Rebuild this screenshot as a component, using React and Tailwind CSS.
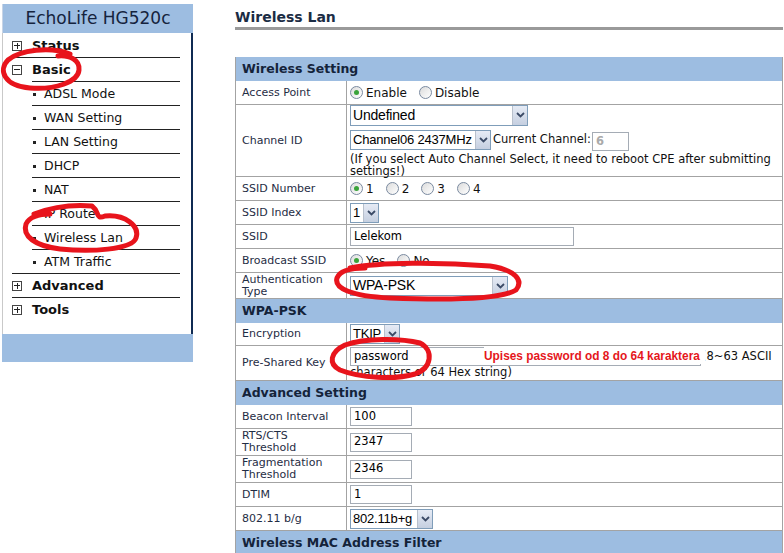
import React from "react";

const FONT = { fontFamily: '"DejaVu Sans", Verdana, sans-serif' };
const ARIAL = { fontFamily: '"Liberation Sans", Arial, sans-serif' };

function PlusBox({ minus }) {
  return (
    <span className="relative inline-block h-[10px] w-[10px] shrink-0 border border-[#444] bg-white">
      <span className="absolute left-[1px] top-[3px] h-[1px] w-[6px] bg-[#222]" />
      {!minus && <span className="absolute left-[3.5px] top-[1px] h-[6px] w-[1px] bg-[#222]" />}
    </span>
  );
}

function NavTop({ label, minus, noLine, subLine }) {
  return (
    <div className="relative ml-[9px] mr-[11px] flex h-[24px] items-center">
      <PlusBox minus={minus} />
      <span className="ml-[10px] text-[13px] font-bold text-[#111]">{label}</span>
      {!noLine && (
        <span className={`absolute bottom-0 right-0 h-[1px] bg-[#222] ${subLine ? "left-[20px]" : "left-0"}`} />
      )}
    </div>
  );
}

function NavSub({ label, last }) {
  return (
    <div className="relative ml-[9px] mr-[11px] flex h-[24px] items-center pl-[21px]">
      <span className="inline-block h-[3px] w-[3px] bg-[#222]" />
      <span className="ml-[8px] text-[12.5px] text-[#111]">{label}</span>
      <span className={`absolute bottom-0 right-0 h-[1px] bg-[#222] ${last ? "left-0" : "left-[20px]"}`} />
    </div>
  );
}

function Radio({ checked, label }) {
  return (
    <span className="mr-[12px] inline-flex items-center gap-[3px]">
      <span className="flex h-[13px] w-[13px] items-center justify-center rounded-full border border-[#7a8aa0] bg-gradient-to-br from-[#dcdcdc] to-white">
        {checked && <span className="h-[5px] w-[5px] rounded-full bg-[#3aa33a]" />}
      </span>
      <span className="text-[12px] text-[#111]">{label}</span>
    </span>
  );
}

function Arrow() {
  return (
    <span className="flex h-full w-[15px] shrink-0 items-center justify-center border-l border-[#b8c0cc] bg-gradient-to-b from-[#e6ebf5] to-[#c5cfe0]">
      <svg width="9" height="6" viewBox="0 0 9 6">
        <path d="M1 1 L4.5 4.5 L8 1" fill="none" stroke="#3b4a66" strokeWidth="1.8" />
      </svg>
    </span>
  );
}

function Select({ w, h = "h-[20px]", text, size = "text-[13px]" }) {
  return (
    <span className={`inline-flex ${w} ${h} shrink-0 items-stretch border border-[#7f9db9] bg-white`} style={ARIAL}>
      <span className={`flex flex-1 items-center overflow-hidden whitespace-nowrap pl-[2px] ${size} tracking-[-0.2px] text-black`}>
        {text}
      </span>
      <Arrow />
    </span>
  );
}

function Input({ w, value, muted }) {
  return (
    <span className={`inline-flex ${w} h-[19px] shrink-0 items-center border border-[#a5acb5] bg-white pl-[3px] text-[11.5px] ${muted ? "font-bold text-[#aaa]" : "text-black"}`}>
      {value}
    </span>
  );
}

function Section({ title }) {
  return (
    <div className="flex h-[24px] items-center bg-[#9dbde1] pl-[6px] text-[12.5px] font-bold text-[#14233a]">
      {title}
    </div>
  );
}

function Row({ label, h, children }) {
  return (
    <div className={`flex ${h} border-b border-[#a3a3a3]`}>
      <div className="flex w-[111px] shrink-0 items-center border-r border-[#a3a3a3] pl-[6px] pr-[8px] text-[11px] leading-[12px] text-[#1f2d44]">
        {label}
      </div>
      <div className="flex flex-1 items-center pl-[3px]">{children}</div>
    </div>
  );
}

export default function App() {
  return (
    <div className="relative h-[553px] w-[784px] overflow-hidden bg-white" style={FONT}>
      <div className="flex">
        {/* sidebar */}
        <div className="ml-[2px] mt-[4px] w-[191px] shrink-0">
          <div className="flex h-[29px] items-center justify-center border-l border-[#c7d4e6] bg-[#9dbde1] text-[17px] text-[#15233d]">
            EchoLife HG520c
          </div>
          <div className="border-l border-r-[2px] border-[#c9c9c9] border-r-[#0f2a52] bg-white pb-[12px] pt-[1px]">
            <NavTop label="Status" />
            <NavTop label="Basic" minus subLine />
            <NavSub label="ADSL Mode" />
            <NavSub label="WAN Setting" />
            <NavSub label="LAN Setting" />
            <NavSub label="DHCP" />
            <NavSub label="NAT" />
            <NavSub label="IP Route" />
            <NavSub label="Wireless Lan" />
            <NavSub label="ATM Traffic" last />
            <NavTop label="Advanced" />
            <NavTop label="Tools" noLine />
          </div>
          <div className="h-[28px] bg-[#9dbde1]" />
        </div>

        {/* main */}
        <div className="ml-[42px] w-[548px] shrink-0">
          <div className="mt-[7px] h-[23px] border-b-[3px] border-[#9a9a9a] text-[14px] font-bold text-[#1b2c44]">
            Wireless Lan
          </div>
          <div className="mt-[27px] border-x border-[#a3a3a3]">
            <Section title="Wireless Setting" />
            <Row label="Access Point" h="h-[24px]">
              <Radio checked label="Enable" />
              <Radio label="Disable" />
            </Row>
            <Row label="Channel ID" h="h-[72px]">
              <div className="flex flex-col">
                <Select w="w-[178px]" h="h-[21px]" text="Undefined" size="text-[14px]" />
                <div className="mt-[2px] flex items-center">
                  <Select w="w-[141px]" text="Channel06 2437MHz" />
                  <span className="ml-[2px] whitespace-nowrap text-[11.5px] text-[#111]">Current Channel:</span>
                  <span className="ml-[1px]">
                    <Input w="w-[37px]" value="6" muted />
                  </span>
                </div>
                <div className="mt-[1px] text-[11.5px] leading-[12px] text-[#111]">
                  (If you select Auto Channel Select, it need to reboot CPE after submitting settings!)
                </div>
              </div>
            </Row>
            <Row label="SSID Number" h="h-[24px]">
              <Radio checked label="1" />
              <Radio label="2" />
              <Radio label="3" />
              <Radio label="4" />
            </Row>
            <Row label="SSID Index" h="h-[24px]">
              <Select w="w-[29px]" text="1" />
            </Row>
            <Row label="SSID" h="h-[24px]">
              <Input w="w-[224px]" value="Lelekom" />
            </Row>
            <Row label="Broadcast SSID" h="h-[24px]">
              <Radio checked label="Yes" />
              <Radio label="No" />
            </Row>
            <Row label="Authentication Type" h="h-[26px]">
              <Select w="w-[158px]" text="WPA-PSK" size="text-[14px]" />
            </Row>
            <Section title="WPA-PSK" />
            <Row label="Encryption" h="h-[23px]">
              <Select w="w-[50px]" text="TKIP" />
            </Row>
            <Row label="Pre-Shared Key" h="h-[35px]">
              <div className="flex flex-col">
                <div className="flex items-center">
                  <Input w="w-[351px]" value="password" />
                  <span className="ml-[1px] whitespace-nowrap text-[11.5px] text-[#111]">(8~63 ASCII</span>
                </div>
                <div className="text-[11.5px] leading-[13px] text-[#111]">characters or 64 Hex string)</div>
              </div>
            </Row>
            <Section title="Advanced Setting" />
            <Row label="Beacon Interval" h="h-[24px]">
              <Input w="w-[62px]" value="100" />
            </Row>
            <Row label="RTS/CTS Threshold" h="h-[27px]">
              <Input w="w-[62px]" value="2347" />
            </Row>
            <Row label="Fragmentation Threshold" h="h-[27px]">
              <Input w="w-[62px]" value="2346" />
            </Row>
            <Row label="DTIM" h="h-[24px]">
              <Input w="w-[62px]" value="1" />
            </Row>
            <Row label="802.11 b/g" h="h-[24px]">
              <Select w="w-[83px]" text="802.11b+g" />
            </Row>
            <Section title="Wireless MAC Address Filter" />
          </div>
        </div>
      </div>

      {/* hand-drawn annotations */}
      <span
        className="absolute left-[484px] top-[347px] origin-left scale-x-[0.88] whitespace-nowrap bg-white pr-[7px] text-[13.5px] font-bold leading-[17px] text-[#e5161b]"
        style={ARIAL}
      >
        Upises password od 8 do 64 karaktera
      </span>
      <svg className="pointer-events-none absolute left-0 top-0" width="784" height="553" viewBox="0 0 784 553">
        <g fill="none" stroke="#e8141c" strokeWidth="5" strokeLinecap="round" strokeLinejoin="round">
          <path d="M70 54 C 50 46, 20 50, 8 60 C -2 70, 4 86, 30 88 C 55 90, 78 82, 79 70 C 80 60, 70 55, 58 56" />
          <path d="M34 214 C 50 208, 70 204, 92 206 C 100 212, 95 220, 105 216 C 125 214, 140 226, 136 238 C 132 250, 90 252, 60 249 C 35 246, 22 236, 26 224 C 30 216, 40 214, 50 214" />
          <path d="M350 268 C 380 262, 440 262, 490 266 C 515 270, 524 280, 516 290 C 500 300, 440 300, 390 298 C 350 296, 334 288, 337 278 C 340 270, 352 268, 365 268" />
          <path d="M345 345 C 365 338, 400 338, 420 343 C 434 350, 432 368, 415 374 C 395 380, 360 378, 340 370 C 328 364, 330 352, 345 345" />
        </g>
      </svg>
    </div>
  );
}
